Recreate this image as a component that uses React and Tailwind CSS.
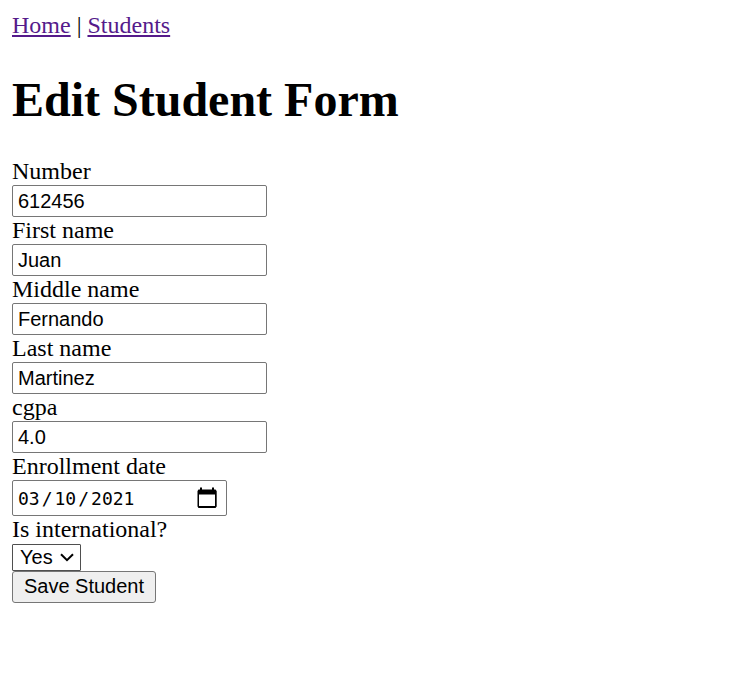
import React from "react";

const fields = [
  { id: "number", label: "Number", value: "612456" },
  { id: "firstName", label: "First name", value: "Juan" },
  { id: "middleName", label: "Middle name", value: "Fernando" },
  { id: "lastName", label: "Last name", value: "Martinez" },
  { id: "cgpa", label: "cgpa", value: "4.0" },
];

function Field({ id, label, value }) {
  return (
    <div className="flex flex-col items-start">
      <label htmlFor={id} className="h-[27px] leading-[27px]">{label}</label>
      <input
        id={id}
        defaultValue={value}
        className="h-8 w-[255px] rounded-[2px] border border-[#767676] bg-white px-[5px] font-['Liberation_Sans',Arial,sans-serif] text-[20px] leading-[23px] text-black"
      />
    </div>
  );
}

function CalendarIcon() {
  return (
    <svg width="20" height="22" viewBox="0 0 20 22" fill="none">
      <path d="M3 0.500h2v2h10v-2h2v2h1.500l1.200 1.500v15.500l-1.200 1.500h-17L0.500 19.500v-15.500L1.500 2.500H3zM2 7.500v11.500h16V7.500z" fill="black" fillRule="evenodd" />
    </svg>
  );
}

export default function App() {
  return (
    <main className="min-h-screen bg-white px-3 pt-3 font-['Liberation_Serif','Times_New_Roman',serif] text-[24px] text-black">
      <nav className="h-[27px] whitespace-pre leading-[27px]">
        <a href="#home" className="text-[#551a8b] underline decoration-2 underline-offset-2">Home</a>
        {" | "}
        <a href="#students" className="text-[#551a8b] underline decoration-2 underline-offset-2">Students</a>
      </nav>
      <h1 className="mt-[33px] mb-[31px] h-[55px] whitespace-nowrap text-[48px] leading-[55px] font-bold">Edit Student Form</h1>
      <form className="flex flex-col items-start" onSubmit={(e) => e.preventDefault()}>
        {fields.map((f) => (
          <Field key={f.id} {...f} />
        ))}
        <span className="h-[27px] leading-[27px]">Enrollment date</span>
        <div className="flex h-9 w-[215px] items-center justify-between rounded-[2px] border border-[#767676] pr-[9px] pl-[5px]">
          <div className="flex pt-[2px] font-['DejaVu_Sans_Mono',monospace] text-[18px] leading-[24px]">
            <span>03</span>
            <span className="px-[2px]">/</span>
            <span>10</span>
            <span className="px-[2px]">/</span>
            <span>2021</span>
          </div>
          <CalendarIcon />
        </div>
        <label className="h-7 leading-[27px]">Is international?</label>
        <div className="flex h-[27px] w-[69px] items-center justify-between rounded-[1px] border border-[#4f4f4f] bg-white pr-[6px] pl-[7px] font-['Liberation_Sans',Arial,sans-serif] text-[20px] leading-[25px]">
          <span>Yes</span>
          <svg width="14" height="9" viewBox="0 0 14 9" fill="none" stroke="black" strokeWidth="2">
            <path d="M1 1.200l6 6 6-6" />
          </svg>
        </div>
        <button className="h-8 w-36 rounded-[3px] border border-[#767676] bg-[#efefef] pb-[2px] text-center font-['Liberation_Sans',Arial,sans-serif] text-[20px] leading-[28px] whitespace-nowrap">
          Save Student
        </button>
      </form>
    </main>
  );
}
